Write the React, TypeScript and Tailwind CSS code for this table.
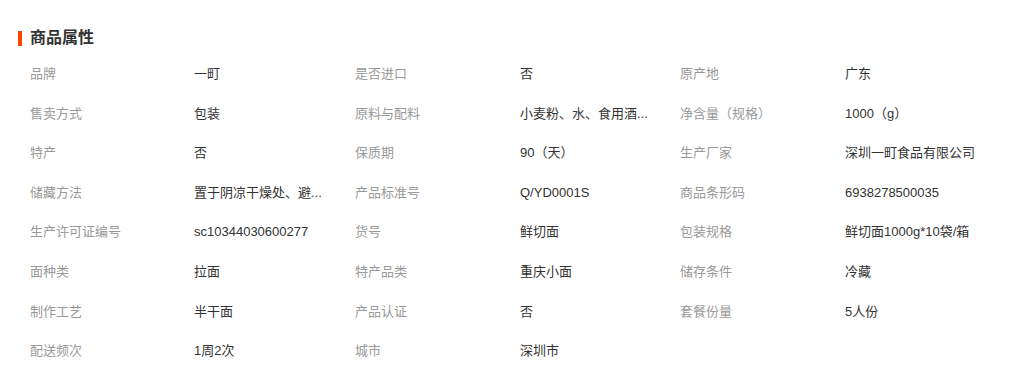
import { Fragment } from "react";

const rows: [string, string][][] = [
  [["品牌", "一町"], ["是否进口", "否"], ["原产地", "广东"]],
  [["售卖方式", "包装"], ["原料与配料", "小麦粉、水、食用酒..."], ["净含量（规格）", "1000（g）"]],
  [["特产", "否"], ["保质期", "90（天）"], ["生产厂家", "深圳一町食品有限公司"]],
  [["储藏方法", "置于阴凉干燥处、避..."], ["产品标准号", "Q/YD0001S"], ["商品条形码", "6938278500035"]],
  [["生产许可证编号", "sc10344030600277"], ["货号", "鲜切面"], ["包装规格", "鲜切面1000g*10袋/箱"]],
  [["面种类", "拉面"], ["特产品类", "重庆小面"], ["储存条件", "冷藏"]],
  [["制作工艺", "半干面"], ["产品认证", "否"], ["套餐份量", "5人份"]],
  [["配送频次", "1周2次"], ["城市", "深圳市"]],
];

export default function App() {
  return (
    <div className="h-[387px] w-[1010px] bg-white font-['Liberation_Sans','Noto_Sans_CJK_SC',sans-serif]">
      <div className="flex items-center pl-[18px] pt-[30px]">
        <span className="h-[15px] w-[4px] bg-[#ff4400]" />
        <h2 className="ml-[8px] text-[16px] font-bold leading-[16px] text-[#333]">商品属性</h2>
      </div>

      <div className="mt-[8px] pl-[30px]">
        {rows.map((row, i) => (
          <div
            key={i}
            className="grid h-[39.6px] grid-cols-[164px_161px_165px_160px_165px_1fr] items-center text-[13px] whitespace-nowrap"
          >
            {row.map(([label, value]) => (
              <Fragment key={label}>
                <span className="text-[#999]">{label}</span>
                <span className="text-[#333]">{value}</span>
              </Fragment>
            ))}
          </div>
        ))}
      </div>
    </div>
  );
}
